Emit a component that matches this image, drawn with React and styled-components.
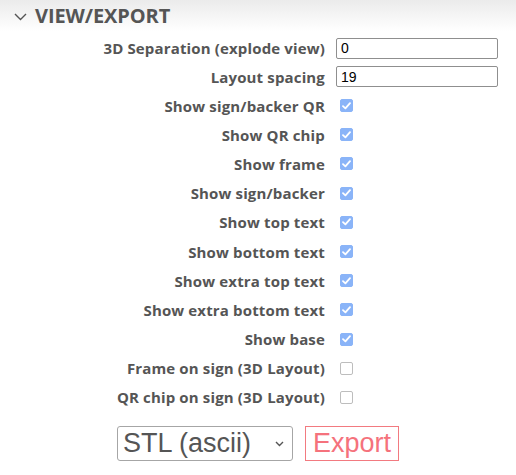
import React from 'react'
import styled, { createGlobalStyle } from 'styled-components'

const GlobalStyle = createGlobalStyle`
  body {
    margin: 0;
    background: #fff;
    font-family: "Open Sans", "Liberation Sans", sans-serif;
  }
`

const Panel = styled.div`
  width: 516px;
  height: 475px;
  overflow: hidden;
`

const Header = styled.div`
  display: flex;
  align-items: center;
  gap: 8px;
  height: 31px;
  padding-left: 14px;
  background: linear-gradient(#ebebeb, #fff);
  color: #555;
  font-weight: 700;
  font-size: 20px;
  letter-spacing: -0.1px;
`

const Chevron = styled.svg`
  width: 13px;
  height: 8px;
  margin-top: 3px;
`

const Form = styled.div`
  display: grid;
  grid-template-columns: 325px 1fr;
  column-gap: 11px;
  padding-top: 3px;
`

const Label = styled.div`
  display: flex;
  align-items: center;
  justify-content: flex-end;
  height: ${p => p.$h}px;
  color: #555;
  font-size: 15px;
  font-weight: 700;
  letter-spacing: 0.15px;
  white-space: nowrap;
`

const Cell = styled.div`
  display: flex;
  align-items: center;
  height: ${p => p.$h}px;
`

const TextInput = styled.input`
  box-sizing: border-box;
  width: 162px;
  height: 21px;
  padding: 0 4px;
  border: 1px solid #8f8f8f;
  border-radius: 2px;
  font-family: "Liberation Sans", Arial, sans-serif;
  font-size: 14px;
  color: #000;
  outline: none;
`

const Box = styled.span`
  box-sizing: border-box;
  display: inline-flex;
  align-items: center;
  justify-content: center;
  width: 13px;
  height: 13px;
  margin-left: 4px;
  border-radius: 2px;
  background: ${p => (p.$checked ? '#8ab4f8' : '#fff')};
  border: 1px solid ${p => (p.$checked ? '#8ab4f8' : '#bdbdbd')};
`

const Footer = styled.div`
  display: flex;
  align-items: center;
  gap: 12px;
  padding: 14px 0 0 117px;
`

const Select = styled.div`
  box-sizing: border-box;
  display: flex;
  align-items: center;
  justify-content: space-between;
  width: 176px;
  height: 35px;
  padding: 0 8px 0 5px;
  border: 1px solid #a6a6a6;
  border-radius: 3px;
  color: #555;
  font-family: "Liberation Sans", Arial, sans-serif;
  font-size: 27px;
`

const ExportButton = styled.button`
  box-sizing: border-box;
  height: 35px;
  padding: 0 7px;
  background: #fff;
  border: 1px solid #f27a80;
  color: #f5727c;
  font-family: "Liberation Sans", Arial, sans-serif;
  font-size: 27px;
  line-height: 1;
`

const Check = ({ checked }) => (
  <Box $checked={checked}>
    {checked && (
      <svg width="9" height="8" viewBox="0 0 9 8">
        <polyline points="1,4.2 3.4,6.4 8,1.2" fill="none" stroke="#fff" strokeWidth="1.8" strokeLinecap="round" strokeLinejoin="round" />
      </svg>
    )}
  </Box>
)

const fields = [
  { label: '3D Separation (explode view)', value: '0' },
  { label: 'Layout spacing', value: '19' }
]

const toggles = [
  ['Show sign/backer QR', true],
  ['Show QR chip', true],
  ['Show frame', true],
  ['Show sign/backer', true],
  ['Show top text', true],
  ['Show bottom text', true],
  ['Show extra top text', true],
  ['Show extra bottom text', true],
  ['Show base', true],
  ['Frame on sign (3D Layout)', false],
  ['QR chip on sign (3D Layout)', false]
]

export default function App () {
  return (
    <Panel>
      <GlobalStyle />
      <Header>
        <Chevron viewBox="0 0 13 8">
          <polyline points="1,1 6.5,6.5 12,1" fill="none" stroke="#555" strokeWidth="1.4" />
        </Chevron>
        VIEW/EXPORT
      </Header>
      <Form>
        {fields.map(f => (
          <React.Fragment key={f.label}>
            <Label $h={28.5}>{f.label}</Label>
            <Cell $h={28.5}><TextInput defaultValue={f.value} /></Cell>
          </React.Fragment>
        ))}
        {toggles.map(([label, checked]) => (
          <React.Fragment key={label}>
            <Label $h={29.2}>{label}</Label>
            <Cell $h={29.2}><Check checked={checked} /></Cell>
          </React.Fragment>
        ))}
      </Form>
      <Footer>
        <Select>
          STL (ascii)
          <svg width="9" height="6" viewBox="0 0 9 6">
            <polyline points="1,1 4.5,4.5 8,1" fill="none" stroke="#555" strokeWidth="1.4" />
          </svg>
        </Select>
        <ExportButton>Export</ExportButton>
      </Footer>
    </Panel>
  )
}
